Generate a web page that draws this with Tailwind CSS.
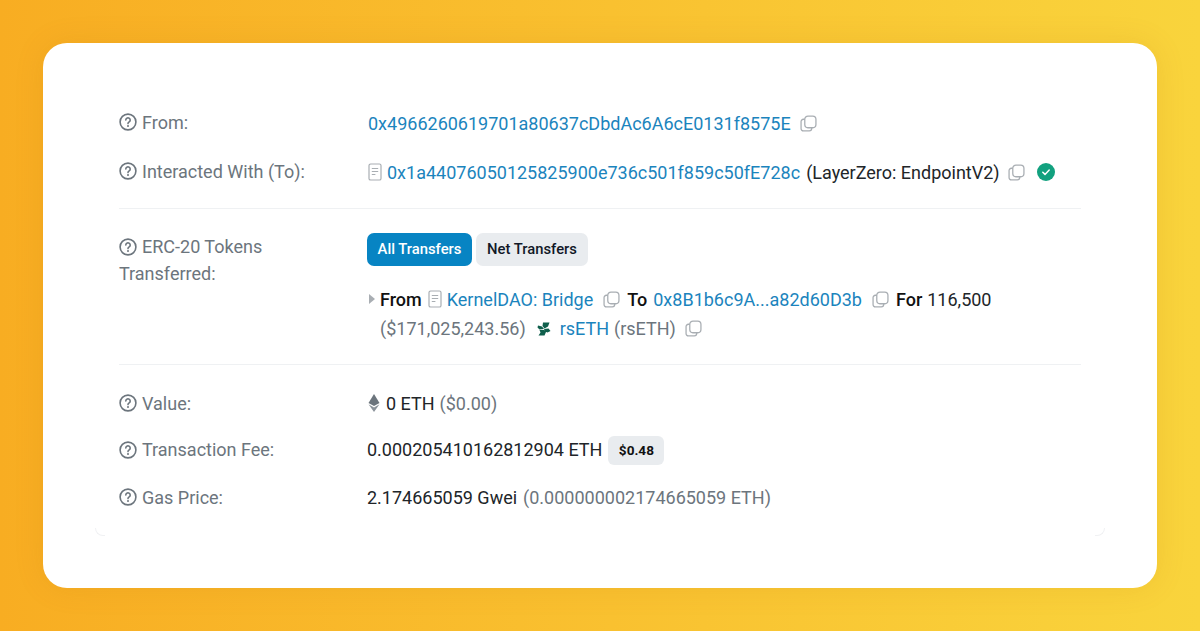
<!DOCTYPE html>
<html lang="en">
<head>
  <meta charset="UTF-8" />
  <meta name="viewport" content="width=device-width, initial-scale=1.0"/>
  <title>Transaction details</title>
  <script src="https://cdn.jsdelivr.net/npm/@tailwindcss/browser@4"></script>
</head>
<body class="h-[631px] w-[1200px] overflow-hidden bg-linear-to-r from-[#f8ad22] to-[#f9d43c] font-['Roboto',sans-serif] text-[18px] text-[#212529]">
  <svg class="hidden">
    <symbol id="q" viewBox="0 0 18 18"><circle cx="9" cy="9" r="7.9" fill="none" stroke="currentColor" stroke-width="1.600"/><path d="M6.800 7a2.200 2.200 0 1 1 3.400 1.900c-.8.5-1.200.9-1.200 1.700" fill="none" stroke="currentColor" stroke-width="1.600" stroke-linecap="round"/><circle cx="9" cy="13" r="1" fill="currentColor"/></symbol>
    <symbol id="copy" viewBox="0 0 16 16"><rect x="4.500" y="1" width="10.500" height="11" rx="3" fill="none" stroke="currentColor" stroke-width="1.200"/><path d="M4.500 4H3.200A2.200 2.200 0 0 0 1 6.200v6.600A2.200 2.200 0 0 0 3.200 15h5.600A2.200 2.200 0 0 0 11 12.800V12" fill="none" stroke="currentColor" stroke-width="1.200"/></symbol>
    <symbol id="doc" viewBox="0 0 14 18"><rect x="1" y="1" width="12" height="16" rx="1.600" fill="none" stroke="currentColor" stroke-width="1.200"/><path d="M3.800 5.500h6.400M3.800 8.500h6.400M3.800 11.500h3.600" fill="none" stroke="currentColor" stroke-width="1.200"/></symbol>
  </svg>

  <div class="relative mx-[43px] mt-[43px] h-[545px] w-[1114px] rounded-[24px] bg-white px-[52px] shadow-[0_0_30px_rgba(170,100,0,0.12)]">
    <!-- faint corners of the inner card -->
    <div class="absolute bottom-[52px] left-[52px] h-[8px] w-[10px] rounded-bl-[12px] border-b border-l border-[#f0f1f3]"></div>
    <div class="absolute bottom-[52px] right-[52px] h-[8px] w-[10px] rounded-br-[12px] border-b border-r border-[#f0f1f3]"></div>

    <div class="px-[24px] pt-[64px]">
      <!-- From / To -->
      <div class="grid grid-cols-[249px_1fr] items-center h-[32px]">
        <div class="-mt-[2px] flex items-center gap-[5px] text-[#6c757d]">
          <svg class="h-[18px] w-[18px]"><use href="#q"/></svg><span>From:</span>
        </div>
        <div class="flex items-center">
          <a class="text-[#1b84bd]">0x4966260619701a80637cDbdAc6A6cE0131f8575E</a>
          <svg class="ml-[9px] h-[17px] w-[17px] text-[#a9aeb3]"><use href="#copy"/></svg>
        </div>
      </div>
      <div class="mt-[17px] grid grid-cols-[249px_1fr] items-center h-[32px]">
        <div class="-mt-[2px] flex items-center gap-[5px] text-[#6c757d]">
          <svg class="h-[18px] w-[18px]"><use href="#q"/></svg><span>Interacted With (To):</span>
        </div>
        <div class="flex items-center">
          <svg class="mr-[5px] h-[18px] w-[14px] text-[#a9aeb3]"><use href="#doc"/></svg>
          <a class="text-[#1b84bd]">0x1a44076050125825900e736c501f859c50fE728c</a>
          <span class="ml-[6px]">(LayerZero: EndpointV2)</span>
          <svg class="ml-[8px] h-[17px] w-[17px] text-[#a9aeb3]"><use href="#copy"/></svg>
          <svg class="ml-[12px] h-[18px] w-[18px]" viewBox="0 0 18 18"><circle cx="9" cy="9" r="9" fill="#12a17f"/><path d="M5.800 9.300l2.200 2.100 4.200-4.400" fill="none" stroke="#fff" stroke-width="1.500" stroke-linecap="round" stroke-linejoin="round"/></svg>
        </div>
      </div>

      <div class="mt-[20px] border-t border-[#eff1f3]"></div>

      <!-- ERC-20 -->
      <div class="mt-[24px] grid grid-cols-[249px_1fr]">
        <div class="text-[#6c757d] leading-[27px]">
          <svg class="mr-[5px] inline-block h-[18px] w-[18px] align-[-3px]"><use href="#q"/></svg>ERC-20 Tokens<br>Transferred:
        </div>
        <div>
          <div class="-ml-[1px] flex gap-[4px] text-[14.800px] font-medium">
            <span class="flex h-[33px] w-[105px] items-center justify-center rounded-[7px] bg-[#0784c3] text-white">All Transfers</span>
            <span class="flex h-[33px] w-[112px] items-center justify-center rounded-[7px] bg-[#e9ecef] text-[#111827]">Net Transfers</span>
          </div>
          <div class="mt-[18px] flex items-center h-[30px]">
            <svg class="mr-[4px] h-[12px] w-[8px] text-[#a9aeb3]" viewBox="0 0 8 12"><path d="M1 1l6 5-6 5Z" fill="currentColor"/></svg>
            <b class="font-medium text-[#111]">From</b>
            <svg class="ml-[6px] mr-[5px] h-[18px] w-[14px] text-[#a9aeb3]"><use href="#doc"/></svg>
            <a class="text-[#1b84bd]">KernelDAO: Bridge</a>
            <svg class="ml-[10px] h-[17px] w-[17px] text-[#a9aeb3]"><use href="#copy"/></svg>
            <b class="ml-[7px] font-medium text-[#111]">To</b>
            <a class="ml-[6px] text-[#1b84bd]">0x8B1b6c9A...a82d60D3b</a>
            <svg class="ml-[10px] h-[17px] w-[17px] text-[#a9aeb3]"><use href="#copy"/></svg>
            <b class="ml-[7px] font-medium text-[#111]">For</b>
            <span class="ml-[5px]">116,500</span>
          </div>
          <div class="flex items-center h-[29px] pl-[12px]">
            <span class="text-[#6c757d]">($171,025,243.56)</span>
            <svg class="ml-[11px] h-[14px] w-[14px]" viewBox="0 0 14 14"><path d="M6 .5h6.500L11 4.500 7.500 6.500 5.500 4ZM1 3.500 5 4.500 7 7 2.500 7.500.5 5.500ZM7 7 11.500 6.500 13.500 9 10.500 10.500 8 9.500ZM2.500 8 7 8 9 10 7.500 13.500 1.500 13.500 3.500 10.500Z" fill="#0f5f4c"/></svg>
            <a class="ml-[9px] text-[#1b84bd]">rsETH</a>
            <span class="ml-[5px] text-[#6c757d]">(rsETH)</span>
            <svg class="ml-[9px] h-[17px] w-[17px] text-[#a9aeb3]"><use href="#copy"/></svg>
          </div>
        </div>
      </div>

      <div class="mt-[21px] border-t border-[#eff1f3]"></div>

      <!-- Value / fee / gas -->
      <div class="mt-[23px] grid grid-cols-[249px_1fr] items-center h-[30px]">
        <div class="flex items-center gap-[5px] text-[#6c757d]">
          <svg class="h-[18px] w-[18px]"><use href="#q"/></svg><span>Value:</span>
        </div>
        <div class="flex items-center">
          <svg class="mr-[6px] h-[18px] w-[12px]" viewBox="0 0 12 18"><path d="M6 0l5.500 9L6 12 .5 9Z" fill="#6c757d"/><path d="M.5 10.300L6 13.500l5.500-3.200L6 18Z" fill="#8c949b"/></svg>
          <span>0 ETH</span><span class="ml-[5px] text-[#6c757d]">($0.00)</span>
        </div>
      </div>
      <div class="mt-[16px] grid grid-cols-[249px_1fr] items-center h-[30px]">
        <div class="flex items-center gap-[5px] text-[#6c757d]">
          <svg class="h-[18px] w-[18px]"><use href="#q"/></svg><span>Transaction Fee:</span>
        </div>
        <div class="-ml-[1px] flex items-center">
          <span>0.000205410162812904 ETH</span>
          <span class="ml-[6px] mt-[2px] flex h-[29px] w-[56px] items-center justify-center rounded-[6px] bg-[#e9ecef] text-[13.600px] font-bold text-[#111]">$0.48</span>
        </div>
      </div>
      <div class="mt-[18px] grid grid-cols-[249px_1fr] items-center h-[30px]">
        <div class="flex items-center gap-[5px] text-[#6c757d]">
          <svg class="h-[18px] w-[18px]"><use href="#q"/></svg><span>Gas Price:</span>
        </div>
        <div class="-ml-[1px] flex items-center">
          <span>2.174665059 Gwei</span><span class="ml-[6px] text-[#6c757d]">(0.000000002174665059 ETH)</span>
        </div>
      </div>
    </div>
  </div>
</body>
</html>
